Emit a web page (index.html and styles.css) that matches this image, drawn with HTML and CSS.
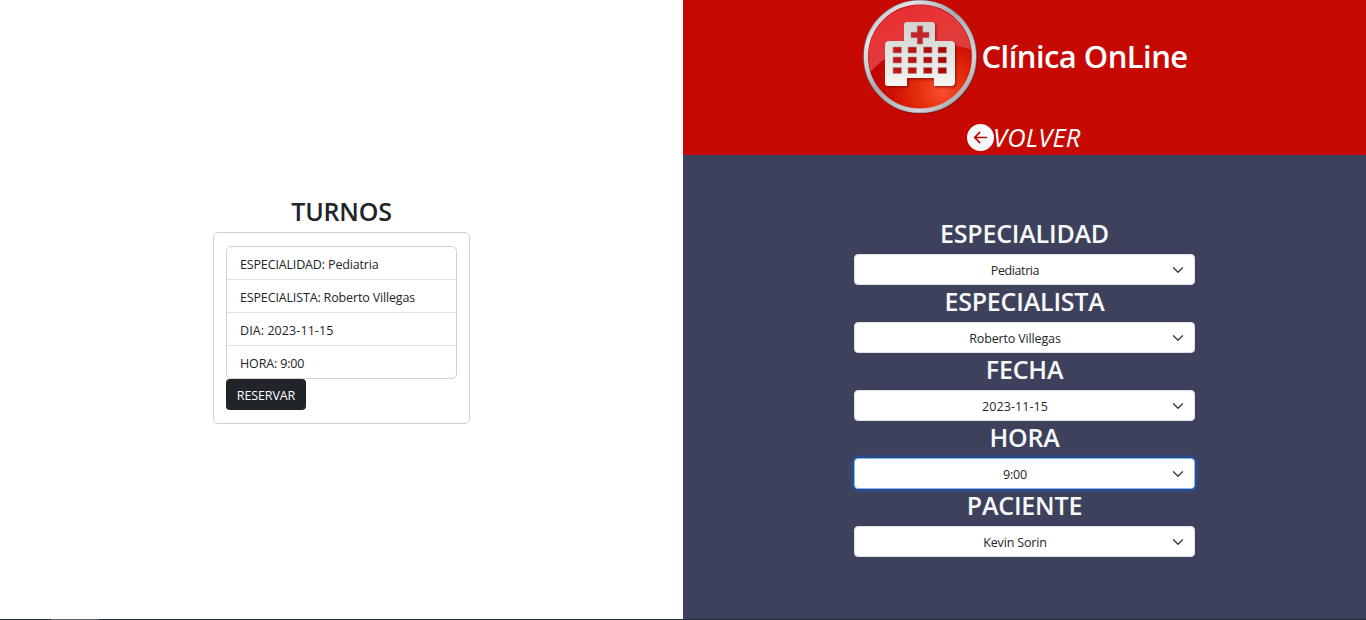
FILE: index.html
```html
<!DOCTYPE html>
<html lang="es">
<head>
<meta charset="utf-8">
<title>Clínica OnLine</title>
<link rel="stylesheet" href="styles.css">
</head>
<body>
<div class="page">
  <main class="turnos">
    <h2 class="title">TURNOS</h2>
    <div class="card">
      <ul class="list">
        <li>ESPECIALIDAD: Pediatria</li>
        <li>ESPECIALISTA: Roberto Villegas</li>
        <li class="numeric">DIA: 2023-11-15</li>
        <li>HORA: 9:00</li>
      </ul>
      <button class="reserve">RESERVAR</button>
    </div>
  </main>
  <aside class="side">
    <header class="header">
      <div class="brand">
        <svg class="logo" width="118" height="118" viewBox="0 0 118 118">
          <defs>
            <linearGradient id="ring" x1="0" y1="0" x2="1" y2="1">
              <stop offset="0" stop-color="#a2a4a9"/><stop offset=".2" stop-color="#e4e5e9"/><stop offset=".45" stop-color="#a6a8ae"/><stop offset=".75" stop-color="#d2d3d8"/><stop offset="1" stop-color="#85878c"/>
            </linearGradient>
            <radialGradient id="disc" cx=".7" cy=".82" r=".7">
              <stop offset="0" stop-color="#fb4f33"/><stop offset=".3" stop-color="#e5300c"/><stop offset=".65" stop-color="#d01003"/><stop offset="1" stop-color="#b80000"/>
            </radialGradient>
            <linearGradient id="gloss" x1="0" y1="0" x2=".5" y2="1">
              <stop offset="0" stop-color="#e1282b"/><stop offset=".4" stop-color="#e93436"/><stop offset="1" stop-color="#d84340"/>
            </linearGradient>
            <linearGradient id="metal" x1="0" y1="0" x2="0" y2="1">
              <stop offset="0" stop-color="#d2d2cf"/><stop offset=".45" stop-color="#e0e2df"/><stop offset="1" stop-color="#f6f6f3"/>
            </linearGradient>
            <linearGradient id="pane" x1="0" y1="0" x2="1" y2="0">
              <stop offset="0" stop-color="#c31b1d"/><stop offset="1" stop-color="#a80800"/>
            </linearGradient>
            <clipPath id="inside"><circle cx="59" cy="56.5" r="51.5"/></clipPath>
            <filter id="soft" x="-20%" y="-20%" width="140%" height="140%"><feGaussianBlur stdDeviation="1.3"/></filter>
          </defs>
          <circle cx="60" cy="58" r="56" fill="#700" opacity=".55" filter="url(#soft)"/>
          <circle cx="59" cy="56.5" r="54" fill="none" stroke="#77797e" stroke-width="5.5"/>
          <circle cx="59" cy="56.5" r="54" fill="url(#disc)" stroke="url(#ring)" stroke-width="4.2"/>
          <path clip-path="url(#inside)" d="M0 0H118V52C88 41 38 37 9 73L0 85Z" fill="url(#gloss)"/>
          <path transform="translate(1.4 1.6)" filter="url(#soft)" opacity=".55" fill="#600" d="M46 22H71Q74 22 74 25V41H90Q94 41 94 45V82Q94 86 90 86H73V78H46V86H27Q24 86 24 83V45Q24 41 28 41H43V25Q43 22 46 22Z"/>
          <path fill="url(#metal)" d="M46 22H71Q74 22 74 25V41H90Q94 41 94 45V82Q94 86 90 86H73V78H46V86H27Q24 86 24 83V45Q24 41 28 41H43V25Q43 22 46 22Z"/>
          <path fill="#c42429" stroke="#a36a68" stroke-width=".6" d="M56.3 26H61.7V32.3H68V37.7H61.7V44H56.3V37.7H50V32.3H56.3Z"/>
          <g fill="url(#pane)" stroke="#b6918d" stroke-width=".6">
            <path d="M32 47H40.500V53H32ZM47 47H55.500V53H47ZM62.500 47H71V53H62.500ZM77 47H85.500V53H77Z"/>
            <path d="M32 57H40.500V63H32ZM47 57H55.500V63H47ZM62.500 57H71V63H62.500ZM77 57H85.500V63H77Z"/>
            <path d="M32 67.500H40.500V73.500H32ZM47 67.500H55.500V73.500H47ZM62.500 67.500H71V73.500H62.500ZM77 67.500H85.500V73.500H77Z"/>
          </g>
        </svg>
        <h1 class="name">Clínica OnLine</h1>
      </div>
      <a class="back">
        <svg width="27" height="27" viewBox="0 0 16 16" fill="#f8f9fa"><path d="M8 0a8 8 0 1 0 0 16A8 8 0 0 0 8 0m3.5 7.5a.5.5 0 0 1 0 1H5.707l2.147 2.146a.5.5 0 0 1-.708.708l-3-3a.5.5 0 0 1 0-.708l3-3a.5.5 0 1 1 .708.708L5.707 7.500z"/></svg>
        <em>VOLVER</em>
      </a>
    </header>
    <form class="form">
      <h3 class="title">ESPECIALIDAD</h3>
      <div class="select tight"><span>Pediatria</span><svg width="12" height="12" viewBox="0 0 16 16"><path d="m2 5 6 6 6-6"/></svg></div>
      <h3 class="title">ESPECIALISTA</h3>
      <div class="select"><span>Roberto Villegas</span><svg width="12" height="12" viewBox="0 0 16 16"><path d="m2 5 6 6 6-6"/></svg></div>
      <h3 class="title">FECHA</h3>
      <div class="select numeric"><span>2023-11-15</span><svg width="12" height="12" viewBox="0 0 16 16"><path d="m2 5 6 6 6-6"/></svg></div>
      <h3 class="title">HORA</h3>
      <div class="select focus"><span>9:00</span><svg width="12" height="12" viewBox="0 0 16 16"><path d="m2 5 6 6 6-6"/></svg></div>
      <h3 class="title">PACIENTE</h3>
      <div class="select"><span>Kevin Sorin</span><svg width="12" height="12" viewBox="0 0 16 16"><path d="m2 5 6 6 6-6"/></svg></div>
    </form>
  </aside>
</div>
<div class="taskbar"><div class="active"></div></div>
</body>
</html>
```

FILE: styles.css
```css
* { box-sizing: border-box; margin: 0; padding: 0; }
body {
  height: 620px;
  overflow: hidden;
  display: flex;
  flex-direction: column;
  background: #fff;
  color: #212529;
  font-family: "Open Sans", "Noto Sans", sans-serif;
  font-size: 12.5px;
}
.page { display: grid; grid-template-columns: 683px 683px; height: 619px; }
.turnos { display: flex; flex-direction: column; align-items: center; padding-top: 195px; }
.title {
  height: 29px;
  margin-bottom: 8px;
  font-size: 25px;
  line-height: 33px;
  font-weight: 600;
  text-align: center;
  white-space: nowrap;
  letter-spacing: -.2px;
}
.card { width: 257px; height: 192px; border: 1px solid #d0d0d1; border-radius: 5px; padding: 13px 12px; }
.list { list-style: none; width: 231px; border: 1px solid #d0d1d3; border-radius: 5px; letter-spacing: -.15px; }
.list li { height: 33px; padding: 0 13px; line-height: 35px; white-space: nowrap; border-bottom: 1px solid #dee2e6; }
.list li:last-child { height: 32px; border-bottom: 0; }
.reserve {
  display: block;
  width: 80px;
  height: 31px;
  border: 0;
  border-radius: 4px;
  background: #212529;
  color: #fff;
  font: 12.5px/33px "Open Sans", "Noto Sans", sans-serif;
  letter-spacing: -.1px;
}
.side { background: #3e415b; }
.header { height: 155px; background: #c60a03; display: flex; flex-direction: column; align-items: center; }
.brand { display: flex; align-items: center; width: 326px; height: 115px; }
.logo { flex: none; margin: 2px 0 0 -1px; }
.name { margin: -3px 0 0 3px; color: #fff; font-size: 31px; font-weight: 600; line-height: 38px; white-space: nowrap; letter-spacing: -.55px; }
.back { display: flex; align-items: center; width: 115px; height: 40px; margin-top: 4px; color: #fff; white-space: nowrap; }
.back svg { flex: none; margin-top: 1px; }
.back em { margin-left: -1px; font-size: 25.5px; letter-spacing: .2px; }
.form { width: 341px; margin: 0 auto; padding-top: 62px; color: #f8f9fa; }
.select {
  display: flex;
  align-items: center;
  height: 31px;
  padding: 0 10px;
  border: 1px solid #dee2e6;
  border-radius: 4px;
  background: #fff;
  color: #212529;
  letter-spacing: -.15px;
}
.select span { flex: 1; text-align: center; padding: 2px 7px 0 0; white-space: nowrap; }
.select svg { flex: none; fill: none; stroke: #343a40; stroke-width: 1.7; stroke-linecap: round; stroke-linejoin: round; }
.focus { border-color: #86b7fe; box-shadow: 0 0 0 3px #2d4b83; }
.tight { letter-spacing: -.4px; }
.numeric { letter-spacing: .08px; }
.taskbar { height: 1px; background: #25313b; padding-left: 51px; }
.active { width: 48px; height: 1px; background: #59646a; }
```
